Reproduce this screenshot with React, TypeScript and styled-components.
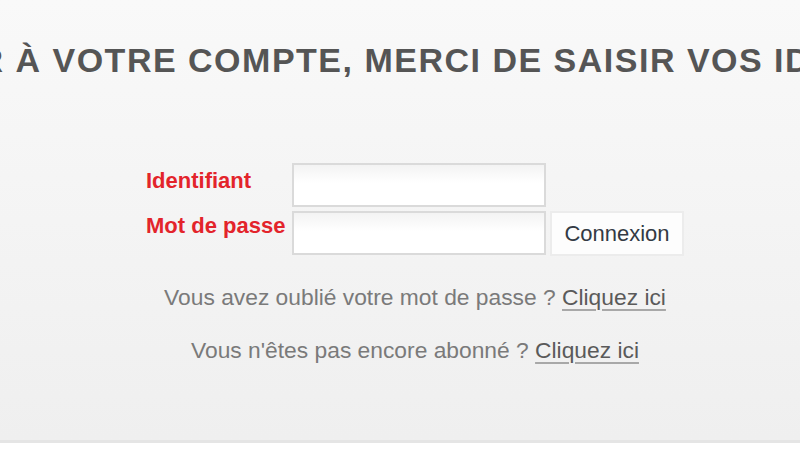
import styled, { createGlobalStyle } from "styled-components";

const Global = createGlobalStyle`
  html, body {
    margin: 0;
    padding: 0;
    background: #ffffff;
    font-family: "Liberation Sans", Arial, sans-serif;
  }
`;

const Panel = styled.div`
  height: 443px;
  box-sizing: border-box;
  padding-top: 43px;
  background: linear-gradient(#f9f9f9, #efefef);
  border-bottom: 3px solid #e5e5e5;
  overflow: hidden;
`;

const Title = styled.h1`
  margin: 0 0 0 -288px;
  white-space: nowrap;
  font-size: 34px;
  line-height: 34px;
  letter-spacing: 1.5px;
  font-weight: bold;
  color: #555555;
`;

const Content = styled.div`
  display: flex;
  flex-direction: column;
  align-items: center;
  padding-left: 30px;
  margin-top: 86px;
`;

const Form = styled.form`
  display: grid;
  grid-template-columns: 142px 254px 134px;
  grid-auto-rows: 44px;
  column-gap: 4px;
  row-gap: 4px;
  margin: 0;
`;

const Label = styled.label<{ $pt: number }>`
  padding-top: ${(p) => p.$pt}px;
  margin-right: -4px;
  font-size: 22px;
  line-height: 22px;
  font-weight: bold;
  color: #e3242b;
  white-space: nowrap;
`;

const Input = styled.input`
  box-sizing: border-box;
  width: 100%;
  height: 100%;
  margin: 0;
  border: 2px solid #dadada;
  background: linear-gradient(#f3f3f3, #ffffff 45%);
  outline: none;
`;

const Button = styled.button`
  box-sizing: border-box;
  height: 45px;
  margin: 0;
  border: 2px solid #ececec;
  background: #fdfdfd;
  font-family: "Liberation Sans", Arial, sans-serif;
  font-size: 22px;
  color: #333a44;
  padding: 0;
`;

const Links = styled.div`
  display: flex;
  flex-direction: column;
  align-items: center;
  gap: 30px;
  margin-top: 31px;
`;

const Line = styled.p`
  margin: 0;
  font-size: 22.8px;
  line-height: 22.8px;
  color: #7a7a7a;
  white-space: nowrap;
`;

const Link = styled.a`
  color: #5a5a5a;
  text-decoration: underline;
  text-decoration-color: #a8a8a8;
  text-decoration-thickness: 2px;
  text-underline-offset: 4px;
`;

export default function App() {
  return (
    <>
      <Global />
      <Panel>
        <Title>POUR ACCÉDER À VOTRE COMPTE, MERCI DE SAISIR VOS IDENTIFIANTS</Title>
        <Content>
          <Form onSubmit={(e) => e.preventDefault()}>
            <Label $pt={7}>Identifiant</Label>
            <Input type="text" />
            <span />
            <Label $pt={4}>Mot de passe</Label>
            <Input type="password" />
            <Button type="submit">Connexion</Button>
          </Form>
          <Links>
            <Line>
              Vous avez oublié votre mot de passe ? <Link href="#">Cliquez ici</Link>
            </Line>
            <Line>
              Vous n'êtes pas encore abonné ? <Link href="#">Cliquez ici</Link>
            </Line>
          </Links>
        </Content>
      </Panel>
    </>
  );
}
